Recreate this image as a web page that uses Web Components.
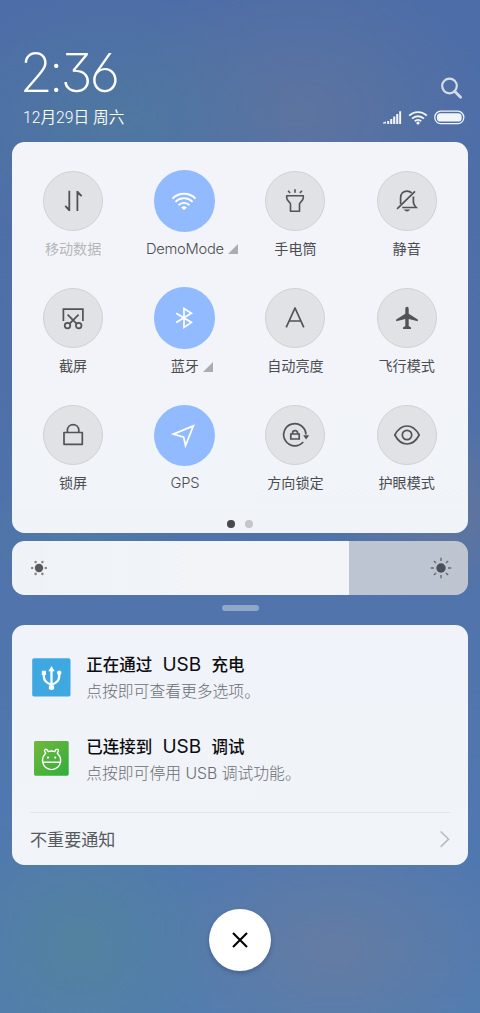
<!DOCTYPE html>
<html lang="zh-CN">
<head>
<meta charset="utf-8">
<title>通知中心</title>
<style>
html,body{margin:0;padding:0}
body{width:480px;height:1013px;overflow:hidden;font-family:Inter,"Noto Sans CJK SC",sans-serif}
shade-header b{font-weight:200;margin:0 .2px 0 -1px}
notice-item i{font-style:normal;font-size:19px;font-weight:400;margin:0 10.3px;line-height:1}
</style>
</head>
<body>
<phone-shade>
  <shade-header>
    <span slot="time">2<b>:</b>36</span>
    <span slot="date">12月29日 周六</span>
  </shade-header>
  <quick-panel>
    <quick-tile disabled><svg width="40" height="40" viewBox="-20 -20 40 40" fill="none" stroke="currentColor" stroke-width="1.8"><path d="M-3.7-10.3V10M-3.7 9.4l-4-4.6M4.4 10V-10M4.4-9.4l4.2 4.6"/><path d="M-3.2 10.3l-5-5.5 5 2.2zM3.9-10.3l5 5.5-5-2.2z" fill="currentColor" stroke="none"/></svg><span slot="label">移动数据</span></quick-tile>
    <quick-tile on latin expandable><svg width="40" height="40" viewBox="-20 -20 40 40" fill="none" stroke="currentColor" stroke-width="1.9"><path d="M-11.5-2.4a16.2 16.2 0 0 1 23 0M-8.6.9a12 12 0 0 1 17.2 0M-5.5 4.1a7.8 7.8 0 0 1 11 0"/><path d="M-2.8 6.5Q0 4 2.8 6.5L.8 8.5Q0 9.3-.8 8.5z" fill="currentColor" stroke="none"/></svg><span slot="label">DemoMode</span></quick-tile>
    <quick-tile><svg width="40" height="40" viewBox="-20 -20 40 40" fill="none" stroke="currentColor" stroke-width="1.6" stroke-linejoin="round"><path d="M-8.3-5.3H8.3V-3.2C8.3 0 4.5 1.2 4.5 3V10.2H-4.5V3C-4.5 1.2-8.3 0-8.3-3.2zM0-11.8v3.5M-6.9-10.3l2 2.4M6.9-10.3l-2 2.4"/></svg><span slot="label">手电筒</span></quick-tile>
    <quick-tile><svg width="40" height="40" viewBox="-20 -20 40 40" fill="none" stroke="currentColor" stroke-width="1.7"><path d="M-6.4 3V-3C-6.4-7.3-3.7-9.9 0-9.9Q2.8-9.9 4.7-8.1M6.4-4.5V1.5Q6.8 4 9.2 6.5H-4.8M-9.9 7.9L8-9.7"/><path d="M-3.3 8.5H3.3Q0 12.3-3.3 8.5z" fill="currentColor" stroke="none"/></svg><span slot="label">静音</span></quick-tile>
    <quick-tile><svg width="40" height="40" viewBox="-20 -20 40 40" fill="none" stroke="currentColor" stroke-width="1.7"><path d="M-9.6 3V-8.8H9.9V3M-5.4-3.3L3.8 5.9M5.6-3.3L-3.6 5.9"/><circle cx="-5.5" cy="7.6" r="2.8"/><circle cx="5.7" cy="7.6" r="2.8"/></svg><span slot="label">截屏</span></quick-tile>
    <quick-tile on expandable><svg width="40" height="40" viewBox="-20 -20 40 40" fill="none" stroke="currentColor" stroke-width="1.7"><path d="M-7.8-4.8L7.4 4.4 0 9.5V-9.5L7.4-4.8-7.8 4.4"/></svg><span slot="label">蓝牙</span></quick-tile>
    <quick-tile><svg width="40" height="40" viewBox="-20 -20 40 40" fill="none" stroke="currentColor" stroke-width="1.7" stroke-linejoin="round"><path d="M-8.8 9.4L0-10 8.8 9.4M-5.8 3H5.8"/></svg><span slot="label">自动亮度</span></quick-tile>
    <quick-tile><svg width="40" height="40" viewBox="-20 -20 40 40" fill="currentColor"><path d="M0-11.3Q1.7-11.3 1.7-9.2V-4.2L10.8 1.5V3.3L1.7 1V8L4 9.4V11H-4V9.4L-1.7 8V1L-10.8 3.3V1.5L-1.7-4.2V-9.2Q-1.7-11.3 0-11.3z"/></svg><span slot="label">飞行模式</span></quick-tile>
    <quick-tile><svg width="40" height="40" viewBox="-20 -20 40 40" fill="none" stroke="currentColor" stroke-width="1.7" stroke-linejoin="round"><path d="M-9-2.5H9.3V9.3H-9zM-5.6-2.8V-4.7C-5.6-12.3 5.8-12.3 5.8-4.7V-2.8"/></svg><span slot="label">锁屏</span></quick-tile>
    <quick-tile on latin><svg width="40" height="40" viewBox="-20 -20 40 40" fill="none" stroke="currentColor" stroke-width="1.7"><path d="M-10.6-.9L9.4-9.1 1.5 10.6-.3 2.2z"/></svg><span slot="label">GPS</span></quick-tile>
    <quick-tile><svg width="40" height="40" viewBox="-20 -20 40 40" fill="none" stroke="currentColor" stroke-width="1.7"><path d="M8.2 7A11.1 11.1 0 1 1 10.9-.5"/><path d="M8.2.2h6L11.1 4.6z" fill="currentColor" stroke="none"/><path d="M-4.2-1H4.2V4H-4.2zM-2.4-1V-2.2C-2.4-5.2 2.6-5.2 2.6-2.2V-1"/></svg><span slot="label">方向锁定</span></quick-tile>
    <quick-tile><svg width="40" height="40" viewBox="-20 -20 40 40" fill="none" stroke="currentColor" stroke-width="1.7" stroke-linejoin="round"><path d="M-12.2 0C-5.8-12 5.8-12 12.2 0C5.8 12-5.8 12-12.2 0z"/><circle r="4.7"/></svg><span slot="label">护眼模式</span></quick-tile>
  </quick-panel>
  <brightness-bar></brightness-bar>
  <drag-handle></drag-handle>
  <notice-panel>
    <notice-item>
      <svg slot="icon" width="39" height="39" viewBox="0 0 39 39"><rect x=".2" y=".3" width="38.3" height="38.3" rx="1.8" fill="#3fa8e1"/><g fill="none" stroke="#fff"><path d="M19.5 12V29M11.8 15V18.5Q12 24.5 19.5 26.6Q27 24.5 27.2 18.5V15" stroke-width="2.3"/></g><path d="M19.5 8l3.2 5.3h-6.4zM9.8 12.8h4.2v4.2h-4.2zM16.9 27.5h5.2V31q-2.6 2-5.2 0z" fill="#fff"/><circle cx="27.2" cy="14.8" r="2.3" fill="#fff"/></svg>
      <span slot="title">正在通过<i>USB</i>充电</span><span slot="text">点按即可查看更多选项。</span>
    </notice-item>
    <notice-item>
      <svg slot="icon" width="39" height="39" viewBox="0 0 39 39"><defs><linearGradient id="g" x2="1" y2="1"><stop stop-color="#72b83c"/><stop offset="1" stop-color="#30ae3b"/></linearGradient></defs><rect x="2" y="2" width="34.7" height="34.7" rx="1.6" fill="url(#g)"/><g fill="none" stroke="#fff" stroke-width="1.4" stroke-linejoin="round"><path d="M13.6 14.2Q11.8 11 13.2 10.4Q15.3 9.8 16.2 12.6Q19.5 11.3 22.8 12.6Q23.6 9.8 25.8 10.4Q27.2 11 25.3 14.2Q28.8 17.4 28.6 21.4C28.3 33.7 10.8 33.7 10.5 21.4Q10.3 17.4 13.6 14.2zM10.7 23.2H28.4"/></g><circle cx="16" cy="18.6" r="1.1" fill="#fff"/><circle cx="23.2" cy="18.6" r="1.1" fill="#fff"/></svg>
      <span slot="title">已连接到<i>USB</i>调试</span><span slot="text">点按即可停用 USB 调试功能。</span>
    </notice-item>
    <span slot="more">不重要通知</span>
  </notice-panel>
  <close-button></close-button>
</phone-shade>
<script>
const define = (name, css, html) => {
  const template = document.createElement('template');
  template.innerHTML = `<style>:host{box-sizing:border-box;display:block}svg,::slotted(svg){display:block}${css}</style>${html}`;
  customElements.define(name, class extends HTMLElement {
    constructor() {
      super();
      this.attachShadow({mode: 'open'}).append(template.content.cloneNode(true));
    }
  });
};

define('phone-shade', `
:host{width:480px;height:1013px;display:flex;flex-direction:column;align-items:center;background:
radial-gradient(ellipse 150px 150px at 80px 945px,#53829f 0,#53829f00 100%),
radial-gradient(ellipse 190px 130px at 335px 950px,#647ca2 0,#647ca200 100%),
radial-gradient(ellipse 180px 130px at 110px 120px,#4f7a9fcc 0,#4f7a9f00 100%),
radial-gradient(ellipse 190px 150px at 300px 115px,#5f759edd 0,#5f759e00 100%),
radial-gradient(ellipse 110px 70px at 80px 530px,#4e7aa6 0,#4e7aa600 100%),
radial-gradient(ellipse 120px 90px at 440px 510px,#62759b 0,#62759b00 100%),
linear-gradient(180deg,#4d6da8 0,#4e6fa7 35%,#5074ab 60%,#5078b0 85%,#507db2 100%)}`, '<slot></slot>');

define('shade-header', `
:host{width:100%;height:142px;padding:45px 15.5px 0 22px;display:flex;justify-content:space-between;color:#fff}
.time{height:56px;line-height:56px;margin-left:-2.5px;font-family:Inter,sans-serif;font-size:54px;font-weight:200;font-feature-settings:"cv09","cv03";letter-spacing:-3.2px;white-space:nowrap}
.date{height:24px;line-height:24px;font-family:Roboto,"Noto Sans CJK SC",sans-serif;font-size:15.7px;margin:5px 0 0 1px;font-weight:350;white-space:nowrap}
.status{padding-top:32px;display:flex;flex-direction:column;align-items:flex-end}
.search{margin-right:1px}
.row{display:flex;gap:6px;margin-top:8.5px}`, `
<div><div class="time"><slot name="time"></slot></div><div class="date"><slot name="date"></slot></div></div>
<div class="status">
<svg class="search" width="24" height="24" viewBox="0 0 24 24" fill="none" stroke="#d5ddea"><circle cx="9.5" cy="9" r="7.3" stroke-width="2.2"/><path d="M14.6 14.2L20.6 20.2" stroke-width="2.8" stroke-linecap="round"/></svg>
<div class="row">
<svg width="19" height="16" viewBox="0 0 19 16" fill="#f2f5fa"><path d="M0 13.5h3v-2L0 12.6zM4.2 11h2v3h-2zM7.2 9h2.1v5H7.2zM10.2 6.6h2.1V14h-2.1zM13.2 4h2.1v10h-2.1zM16.2 1.2h1.9V14h-1.9z"/></svg>
<svg width="20" height="16" viewBox="0 0 20 16" fill="none" stroke="#f2f5fa" stroke-width="1.9"><path d="M1.2 5.7a12.5 12.5 0 0 1 17.6 0M4.1 8.6a8.4 8.4 0 0 1 11.8 0M6.8 11.2a4.7 4.7 0 0 1 6.4 0"/><circle cx="10" cy="13" r="1.6" fill="#f2f5fa" stroke="none"/></svg>
<svg width="31" height="16" viewBox="0 0 31 16"><rect x=".8" y="1.2" width="29" height="12.4" rx="6" fill="none" stroke="#f2f5fa" stroke-width="1.3"/><rect x="2.9" y="3.3" width="24.8" height="8.2" rx="3.6" fill="#f2f5fa"/></svg>
</div></div>`);

define('quick-panel', `
:host{width:456px;height:391px;flex:none;border-radius:12.5px;padding:28.8px 5.5px 0;background:linear-gradient(180deg,#f3f4f9 0,#f2f4f9 60%,#f0f4f8)}
.grid{display:grid;grid-template-columns:repeat(4,111.2px);grid-auto-rows:117.3px}
.dots{display:flex;justify-content:center;gap:10.6px;height:7.4px;margin-top:-2.3px}
.dots i{width:7.4px;height:7.4px;border-radius:50%;background:#c4c6c9}.dots i:first-child{background:#47494b}`,
`<div class="grid"><slot></slot></div><div class="dots"><i></i><i></i></div>`);

define('quick-tile', `
:host{display:flex;flex-direction:column;align-items:center;color:#515356}
.disc{box-sizing:border-box;width:60px;height:60px;border-radius:50%;display:flex;align-items:center;justify-content:center;background:#e0e2e5;border:1px solid #cfd2d5}
:host([on]) .disc{width:61.4px;height:61.4px;margin:-.7px 0;background:#92bbff;border:0;color:#fff}
.label{position:relative;margin-top:7px;height:22px;line-height:22px;font-size:14.1px;color:#4b4d50;white-space:nowrap}
:host([on]) .label{left:.6px}
:host([latin]) .label{font-size:14.7px;font-weight:350;letter-spacing:-.25px}
:host([disabled]) .label{color:#b5b7bb}
.more{display:none;position:absolute;left:calc(100% + 4px);top:6.5px}
:host([expandable]) .more{display:block}`, `
<div class="disc"><slot></slot></div>
<div class="label"><slot name="label"></slot><svg class="more" width="11" height="11"><path d="M0 10L10 0V10z" fill="#aaacaf"/></svg></div>`);

define('brightness-bar', `
:host{width:456px;height:53.5px;flex:none;margin-top:8px;border-radius:12.5px;padding:0 15px 0 15px;display:flex;align-items:center;justify-content:space-between;background:linear-gradient(90deg,#eff3f7 0,#f3f4f8 337px,#bdc5d3 337px,#bec5d1 100%)}`, `
<svg width="24" height="24" viewBox="-12 -12 24 24" fill="#858789"><circle r="4.2" fill="#57595b"/><g><circle cx="6.8" r="1.3"/><circle cx="-6.8" r="1.3"/><circle cx="3.4" cy="5.9" r="1.3"/><circle cx="-3.4" cy="5.9" r="1.3"/><circle cx="3.4" cy="-5.9" r="1.3"/><circle cx="-3.4" cy="-5.9" r="1.3"/></g></svg>
<svg width="24" height="24" viewBox="-12 -12 24 24" fill="#4a4f59"><circle r="4.7"/><path d="M0-10.2V-7M0 7v3.2M-10.2 0H-7M7 0h3.2M-7.1-7.1l2.2 2.2M7.1 7.1L4.9 4.9M-7.1 7.1l2.2-2.2M7.1-7.1L4.9-4.9" stroke="#646b77" stroke-width="1.4"/></svg>`);

define('drag-handle', `:host{width:37px;height:6px;flex:none;margin:10.6px 0 13.9px;border-radius:3px;background:#91a7ca}`, '');

define('notice-panel', `
:host{width:456px;height:240.5px;flex:none;border-radius:12.5px;background:linear-gradient(180deg,#f0f3f9,#f0f3f8 60%,#f1f4f8);padding:28.5px 17.5px 0 18px}
.list{height:158.5px}
footer{box-sizing:border-box;height:54px;padding-bottom:1.5px;border-top:1px solid #e3e6ea;display:flex;justify-content:space-between;align-items:center;font-size:17.1px;color:#57595d}`, `
<div class="list"><slot></slot></div>
<footer><slot name="more"></slot><svg width="12" height="18" viewBox="0 0 12 18" fill="none" stroke="#b9bcc1" stroke-width="1.6"><path d="M1.6 1.5L9.6 9.2 1.6 16.9"/></svg></footer>`);

define('notice-item', `
:host{display:flex;height:81.5px;padding-left:1.7px}
.icon{width:39px;padding-top:4.5px;margin-right:15.5px}
.title{height:24px;line-height:24px;font-size:16.5px;font-weight:500;color:#0c0d0e;white-space:nowrap}
.text{height:26px;line-height:26px;margin-top:2px;font-size:15.8px;color:#6b6d71;font-weight:300;white-space:nowrap}`, `
<div class="icon"><slot name="icon"></slot></div><div><div class="title"><slot name="title"></slot></div><div class="text"><slot name="text"></slot></div></div>`);

define('close-button', `
:host{width:62.4px;height:62.4px;flex:none;margin-top:43.2px;border-radius:50%;background:#fff;box-shadow:0 2px 4px #1c365a60;display:flex;align-items:center;justify-content:center}`, `
<svg width="18" height="18" viewBox="-9 -9 18 18" stroke="#000" stroke-width="2.1"><path d="M-7-7L7 7M7-7L-7 7"/></svg>`);
</script>
</body>
</html>
